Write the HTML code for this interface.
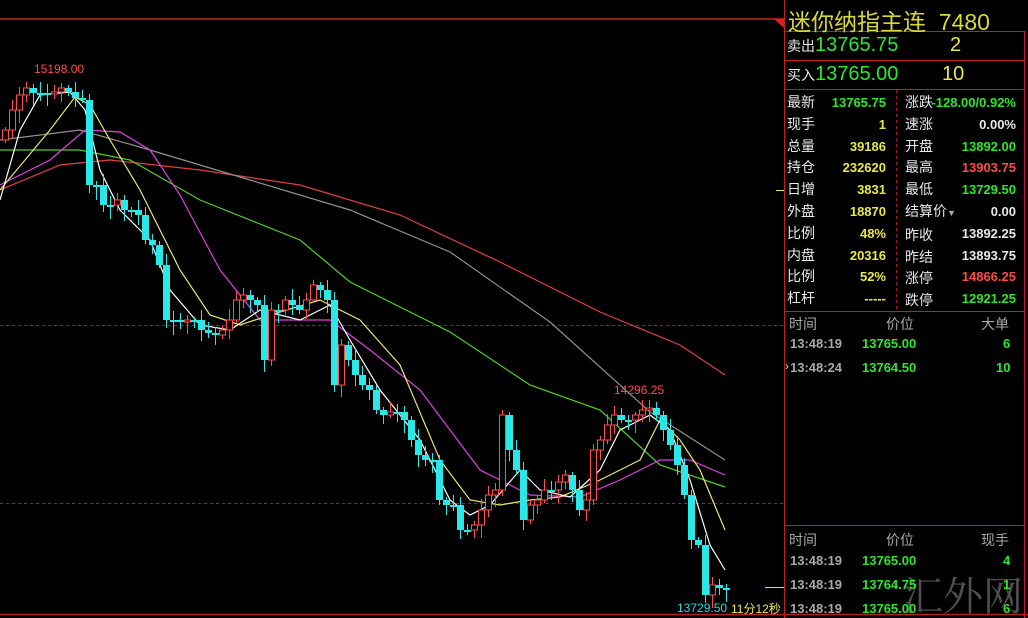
<!DOCTYPE html>
<html><head><meta charset="utf-8"><style>
html,body{margin:0;padding:0;background:#000;width:1028px;height:618px;overflow:hidden}
body{position:relative;font-family:"Liberation Sans","Noto Sans CJK SC",sans-serif}
.a{position:absolute;white-space:nowrap}
.w{color:#e8e8e8}.y{color:#e8e84a}.g{color:#2ee62e}.r{color:#ff4a4a}.gr{color:#a8a8a8}
.lab{font-size:14px;color:#e8e8e8}
.num{font-size:13px;font-weight:bold}
</style></head><body>
<svg class="a" style="left:0;top:0" width="1028" height="618" id="s">
<line x1="0" y1="19" x2="784" y2="19" stroke="#c82020" stroke-width="1.5"/>
<polygon points="774,19 784,19 784,28" fill="#e02020"/>
<line x1="0" y1="325.5" x2="784" y2="325.5" stroke="#a02020" stroke-dasharray="3,3"/>
<line x1="0" y1="503.5" x2="784" y2="503.5" stroke="#a02020" stroke-dasharray="3,3"/>
<line x1="0" y1="614.5" x2="1028" y2="614.5" stroke="#b02020" stroke-width="1.5"/>
<line x1="784.5" y1="0" x2="784.5" y2="618" stroke="#c02020"/>
<line x1="1024.5" y1="31" x2="1024.5" y2="618" stroke="#c02020"/>
<line x1="784" y1="31.5" x2="1025" y2="31.5" stroke="#c02020"/>
<line x1="784" y1="60.5" x2="1025" y2="60.5" stroke="#c02020"/>
<line x1="784" y1="89.5" x2="1025" y2="89.5" stroke="#c02020"/>
<line x1="784" y1="311.5" x2="1025" y2="311.5" stroke="#c02020"/>
<line x1="784" y1="525.5" x2="1025" y2="525.5" stroke="#c02020"/>
<line x1="896.5" y1="90" x2="896.5" y2="311" stroke="#a02020" stroke-dasharray="3,3"/>
<line x1="776" y1="190.5" x2="784" y2="190.5" stroke="#e8e84a"/>
<line x1="765" y1="587.5" x2="784" y2="587.5" stroke="#e8e84a"/>
<g fill="none" stroke-width="1.2">
<polyline stroke="#e04040" points="0,190 60,165 110,160 200,170 300,185 400,215 500,262 600,312 680,345 725,375"/>
<polyline stroke="#909090" points="0,140 80,130 150,150 250,180 350,210 450,252 550,322 650,412 725,460"/>
<polyline stroke="#50d020" points="0,150 80,150 130,160 200,200 300,240 350,282 450,332 530,385 600,410 660,465 725,487"/>
<polyline stroke="#e040e0" points="0,185 50,160 85,130 120,132 150,150 180,195 220,270 260,320 330,320 370,350 420,390 480,470 530,495 580,497 620,480 660,460 690,460 725,475"/>
<polyline stroke="#e8e870" points="0,190 50,130 75,97 90,105 110,140 140,190 180,270 210,315 240,325 270,315 320,300 360,320 400,365 440,460 470,500 500,505 530,500 560,497 600,480 640,460 660,420 680,440 700,470 725,530"/>
<polyline stroke="#ffffff" points="0,200 20,130 40,95 70,92 85,110 100,170 120,210 150,240 170,290 200,325 230,330 260,310 300,320 330,305 350,340 380,390 420,440 450,500 470,515 490,505 520,470 540,490 570,497 600,470 620,430 650,415 670,430 690,480 710,545 725,570"/>
</g>
<g id="c"></g>
</svg>
<script>
var p=[[5,130],[12,110],[19,95],[26,88],[33,93],[40,93],[47,93],[54,92],[61,88],[68,92],[75,98],[82,100],[89,185],[96,185],[103,205],[110,205],[117,200],[124,210],[131,210],[138,215],[145,240],[152,245],[159,265],[166,320],[173,320],[180,322],[187,320],[194,320],[201,330],[208,333],[215,335],[222,330],[229,320],[236,300],[243,295],[250,300],[257,305],[264,360],[271,310],[278,310],[285,300],[292,305],[299,310],[306,300],[313,285],[320,290],[327,300],[334,385],[341,345],[348,360],[355,375],[362,385],[369,390],[376,410],[383,415],[390,412],[397,412],[404,420],[411,440],[418,455],[425,460],[432,460],[439,500],[446,505],[453,505],[460,530],[467,530],[474,525],[481,510],[488,495],[495,490],[502,415],[509,450],[516,470],[523,520],[530,505],[537,500],[544,490],[551,490],[558,482],[565,475],[572,490],[579,510],[586,500],[593,450],[600,440],[607,425],[614,415],[621,420],[628,420],[635,415],[642,410],[649,408],[656,415],[663,430],[670,445],[677,465],[684,495],[691,540],[698,545],[705,595],[712,585],[719,588],[726,588]];
var h='',prev=140;
for(var i=0;i<p.length;i++){var x=p[i][0],c=p[i][1],o=prev;var t=Math.min(o,c),b=Math.max(o,c);if(b-t<2)b=t+2;var up=c<o;var col=up?'#ff5050':'#28e8e8';var wt=t-3-(i*7%9),wb=b+3+(i*5%11);
h+='<line x1="'+(x+.5)+'" y1="'+wt+'" x2="'+(x+.5)+'" y2="'+wb+'" stroke="'+col+'"/>';
if(up)h+='<rect x="'+(x-2.5)+'" y="'+t+'" width="6" height="'+(b-t)+'" fill="#000" stroke="'+col+'"/>';else h+='<rect x="'+(x-3)+'" y="'+t+'" width="7" height="'+(b-t)+'" fill="'+col+'"/>';prev=c;}
document.getElementById('c').innerHTML=h;
</script>
<div class="a r" style="left:34px;top:62px;font-size:12px">15198.00</div>
<div class="a r" style="left:614px;top:383px;font-size:12px">14296.25</div>
<div class="a" style="left:677px;top:601px;font-size:12px;color:#28d8e8">13729.50</div>
<div class="a y" style="left:731px;top:600px;font-size:12px">11分12秒</div>

<div class="a" style="left:788px;top:3px;font-size:23px;color:#d8d838">迷你纳指主连&nbsp;&nbsp;7480</div>
<div class="a lab" style="left:787px;top:36px">卖出</div>
<div class="a g" style="left:815px;top:34px;font-size:20px">13765.75</div>
<div class="a y" style="left:950px;top:34px;font-size:20px">2</div>
<div class="a lab" style="left:787px;top:65px">买入</div>
<div class="a g" style="left:815px;top:63px;font-size:20px">13765.00</div>
<div class="a y" style="left:942px;top:63px;font-size:20px">10</div>

<div class="a" style="left:787px;top:92px;width:100px;line-height:21.8px">
<div class="lab" style="line-height:21.8px">最新<br>现手<br>总量<br>持仓<br>日增<br>外盘<br>比例<br>内盘<br>比例<br>杠杆</div></div>
<div class="a num" style="left:800px;top:92px;width:86px;text-align:right;line-height:21.8px">
<span class="g">13765.75</span><br><span class="y">1</span><br><span class="y">39186</span><br><span class="y">232620</span><br><span class="y">3831</span><br><span class="y">18870</span><br><span class="y">48%</span><br><span class="y">20316</span><br><span class="y">52%</span><br><span class="y">-----</span></div>
<div class="a lab" style="left:905px;top:92px;line-height:21.8px">涨跌<br>速涨<br>开盘<br>最高<br>最低<br>结算价<span style="font-size:9px;color:#aaa">▼</span><br>昨收<br>昨结<br>涨停<br>跌停</div>
<div class="a num" style="left:920px;top:92px;width:96px;text-align:right;line-height:21.8px">
<span class="g">-128.00/0.92%</span><br><span class="w">0.00%</span><br><span class="g">13892.00</span><br><span class="r">13903.75</span><br><span class="g">13729.50</span><br><span class="w">0.00</span><br><span class="w">13892.25</span><br><span class="w">13893.75</span><br><span class="r">14866.25</span><br><span class="g">12921.25</span></div>

<div class="a gr" style="left:789px;top:314px;font-size:14px">时间</div>
<div class="a gr" style="left:886px;top:314px;font-size:14px">价位</div>
<div class="a gr" style="left:981px;top:314px;font-size:14px">大单</div>
<div class="a num gr" style="left:790px;top:336px">13:48:19</div>
<div class="a num g" style="left:862px;top:336px">13765.00</div>
<div class="a num g" style="left:1003px;top:336px">6</div>
<div class="a y" style="left:785px;top:359px;font-size:12px">›</div>
<div class="a num gr" style="left:790px;top:360px">13:48:24</div>
<div class="a num g" style="left:862px;top:360px">13764.50</div>
<div class="a num g" style="left:996px;top:360px">10</div>

<div class="a" style="left:903px;top:565px;font-size:40px;color:#505050;font-family:'Noto Serif CJK SC',serif">汇外网</div>
<div class="a gr" style="left:789px;top:530px;font-size:14px">时间</div>
<div class="a gr" style="left:886px;top:530px;font-size:14px">价位</div>
<div class="a gr" style="left:981px;top:530px;font-size:14px">现手</div>
<div class="a num gr" style="left:790px;top:553px">13:48:19</div>
<div class="a num g" style="left:862px;top:553px">13765.00</div>
<div class="a num g" style="left:1003px;top:553px">4</div>
<div class="a num gr" style="left:790px;top:577px">13:48:19</div>
<div class="a num g" style="left:862px;top:577px">13764.75</div>
<div class="a num g" style="left:1003px;top:577px">1</div>
<div class="a num gr" style="left:790px;top:601px">13:48:19</div>
<div class="a num g" style="left:862px;top:601px">13765.00</div>
<div class="a num g" style="left:1003px;top:601px">6</div>
</body></html>
